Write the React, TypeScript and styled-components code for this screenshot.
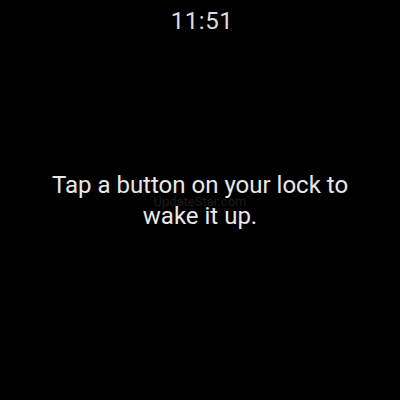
import styled, { createGlobalStyle } from 'styled-components'

const GlobalStyle = createGlobalStyle`
  html, body {
    margin: 0;
    padding: 0;
    background: #000;
  }
  body {
    font-family: Roboto, "Noto Sans", Arial, sans-serif;
  }
`

const App = () => {
  return (
    <>
      <GlobalStyle />
      <Screen>
        <StatusBar>
          <Clock>11:51</Clock>
        </StatusBar>
        <Body>
          <Message>
            Tap a button on your lock to
            <br />
            wake it up.
          </Message>
          <Watermark>UpdateStar.com</Watermark>
        </Body>
      </Screen>
    </>
  )
}

export default App

const Screen = styled.div`
  width: 400px;
  height: 400px;
  background: #000;
  display: flex;
  flex-direction: column;
  overflow: hidden;
`

const StatusBar = styled.div`
  display: flex;
  justify-content: center;
  padding-top: 6px;
  height: 30px;
`

const Clock = styled.div`
  font-size: 24px;
  line-height: 30px;
  color: #dcdcdc;
  letter-spacing: 0.5px;
  padding-left: 4px;
`

const Body = styled.div`
  position: relative;
  flex: 1;
  display: flex;
  align-items: center;
  justify-content: center;
  padding-bottom: 34px;
`

const Message = styled.div`
  font-size: 24px;
  line-height: 31px;
  color: #e8e8e8;
  text-align: center;
`

const Watermark = styled.div`
  position: absolute;
  top: 158px;
  left: 0;
  right: 0;
  text-align: center;
  font-size: 13px;
  color: #1c1c1c;
`
